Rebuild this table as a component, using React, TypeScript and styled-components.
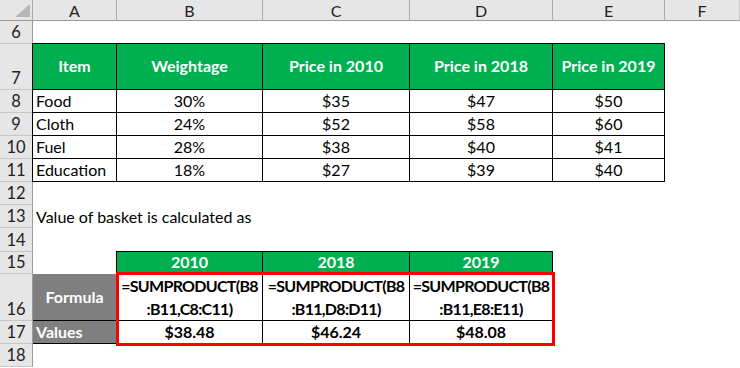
import React from 'react';
import styled, { createGlobalStyle } from 'styled-components';

const GlobalStyle = createGlobalStyle`
  html, body {
    margin: 0;
    padding: 0;
    background: #ffffff;
  }
  body {
    font-family: Lato, "Open Sans", sans-serif;
    font-size: 16px;
    color: #000;
  }
`;

const COLS = ['A', 'B', 'C', 'D', 'E', 'F'];
const ROWS = [6, 7, 8, 9, 10, 11, 12, 13, 14, 15, 16, 17, 18];

// grid row index for a sheet row (row 1 of the grid is the column header)
const gr = (row: number) => row - 4;
// grid column index for a sheet column (column 1 is the row numbers)
const gc = (col: string) => COLS.indexOf(col) + 2;

const items = [
  { name: 'Item', weight: 'Weightage', p10: 'Price in 2010', p18: 'Price in 2018', p19: 'Price in 2019' },
  { name: 'Food', weight: '30%', p10: '$35', p18: '$47', p19: '$50' },
  { name: 'Cloth', weight: '24%', p10: '$52', p18: '$58', p19: '$60' },
  { name: 'Fuel', weight: '28%', p10: '$38', p18: '$40', p19: '$41' },
  { name: 'Education', weight: '18%', p10: '$27', p18: '$39', p19: '$40' },
];

const basket = [
  { col: 'B', year: '2010', formula: ['=SUMPRODUCT(B8', ':B11,C8:C11)'], value: '$38.48' },
  { col: 'C', year: '2018', formula: ['=SUMPRODUCT(B8', ':B11,D8:D11)'], value: '$46.24' },
  { col: 'D', year: '2019', formula: ['=SUMPRODUCT(B8', ':B11,E8:E11)'], value: '$48.08' },
];

export default function App() {
  return (
    <>
      <GlobalStyle />
      <Sheet>
        <Corner>
          <svg width="33" height="21" viewBox="0 0 33 21">
            <polygon points="15,17 30,17 30,4" fill="#b7b7b7" />
          </svg>
        </Corner>
        {COLS.map((c) => (
          <ColHead key={c} $last={c === 'F'}>{c}</ColHead>
        ))}
        {ROWS.map((r) => (
          <RowNum key={r} style={{ gridRow: gr(r) }}>
            {r}
          </RowNum>
        ))}

        {items.map((it, i) => {
          const row = 7 + i;
          const head = i === 0;
          const cells = [it.name, it.weight, it.p10, it.p18, it.p19];
          return cells.map((text, j) => (
            <Cell
              key={`${row}-${j}`}
              $row={gr(row)}
              $col={gc(COLS[j])}
              $fill={head ? 'green' : undefined}
              $bold={head}
              $align={!head && j === 0 ? 'left' : 'center'}
              $valign={head ? 'center' : 'end'}
              $top={head}
              $left={j === 0}
              $border
            >
              {text}
            </Cell>
          ));
        })}

        <Note style={{ gridRow: gr(13) }}>Value of basket is calculated as</Note>

        <Cell $row={gr(16)} $col={gc('A')} $fill="gray" $bold $align="center" $valign="center" $border>
          Formula
        </Cell>
        <Cell $row={gr(17)} $col={gc('A')} $fill="gray" $bold $align="left" $valign="end" $border>
          Values
        </Cell>

        {basket.map((b) => (
          <React.Fragment key={b.col}>
            <Cell $row={gr(15)} $col={gc(b.col)} $fill="green" $bold $align="center" $valign="end" $top $left={b.col === 'B'} $border>
              {b.year}
            </Cell>
            <Cell $row={gr(16)} $col={gc(b.col)} $bold $align="center" $valign="center" $left={b.col === 'B'} $border>
              <Wrapped>
                {b.formula.map((line) => (
                  <span key={line}>{line}</span>
                ))}
              </Wrapped>
            </Cell>
            <Cell $row={gr(17)} $col={gc(b.col)} $bold $align="center" $valign="end" $left={b.col === 'B'} $border>
              {b.value}
            </Cell>
          </React.Fragment>
        ))}

        <Highlight />
      </Sheet>
    </>
  );
}

const Sheet = styled.div`
  display: grid;
  grid-template-columns: 33px 84px 146px 147px 143px 112px 1fr;
  grid-template-rows: 21px 23px 46px 23px 23px 23px 23px 23px 23px 24px 22px 47px 23px 23px 1fr;
  width: 740px;
  height: 368px;
  overflow: hidden;
  background: #fff;
`;

const Corner = styled.div`
  grid-row: 1;
  grid-column: 1;
  background: #e6e6e6;
  border-right: 1px solid #ababab;
  border-bottom: 1px solid #9b9b9b;
  box-sizing: border-box;
  line-height: 0;
`;

const ColHead = styled.div<{ $last?: boolean }>`
  grid-row: 1;
  display: flex;
  align-items: center;
  justify-content: center;
  background: #e6e6e6;
  border-right: 1px solid ${({ $last }) => ($last ? '#c8c8c8' : '#ababab')};
  border-bottom: 1px solid #9b9b9b;
  box-sizing: border-box;
  color: #222;
  font-size: 16px;
  ${({ $last }) => $last && 'grid-column: 7 / 8; max-width: 100px;'}
`;

const RowNum = styled.div`
  grid-column: 1;
  display: flex;
  align-items: flex-end;
  justify-content: center;
  padding-bottom: 1px;
  background: #e6e6e6;
  border-right: 1px solid #9b9b9b;
  border-bottom: 1px solid #c6c6c6;
  box-sizing: border-box;
  color: #222;
  font-size: 16.5px;
  line-height: 20px;
`;

const Cell = styled.div<{
  $row: number;
  $col: number;
  $fill?: 'green' | 'gray';
  $bold?: boolean;
  $align: 'left' | 'center';
  $valign: 'center' | 'end';
  $top?: boolean;
  $left?: boolean;
  $border?: boolean;
}>`
  grid-row: ${({ $row }) => $row};
  grid-column: ${({ $col }) => $col};
  display: flex;
  align-items: ${({ $valign }) => ($valign === 'end' ? 'flex-end' : 'center')};
  justify-content: ${({ $align }) => ($align === 'left' ? 'flex-start' : 'center')};
  padding: 0 3px 1px;
  box-sizing: border-box;
  background: ${({ $fill }) => ($fill === 'green' ? '#00b050' : $fill === 'gray' ? '#7f7f7f' : '#fff')};
  color: ${({ $fill }) => ($fill ? '#fff' : '#000')};
  font-weight: ${({ $bold }) => ($bold ? 700 : 400)};
  font-size: 16px;
  line-height: 20px;
  white-space: nowrap;
  border-right: ${({ $border }) => ($border ? '1px solid #000' : 'none')};
  border-bottom: ${({ $border }) => ($border ? '1px solid #000' : 'none')};
  border-top: ${({ $top }) => ($top ? '1px solid #000' : 'none')};
  margin-top: ${({ $top }) => ($top ? '-1px' : '0')};
  border-left: ${({ $left }) => ($left ? '1px solid #000' : 'none')};
  margin-left: ${({ $left }) => ($left ? '-1px' : '0')};
`;

const Wrapped = styled.div`
  display: flex;
  flex-direction: column;
  align-items: center;
  line-height: 23px;
  letter-spacing: -0.7px;
`;

const Note = styled.div`
  grid-column: 2 / 5;
  display: flex;
  align-items: flex-end;
  padding: 0 3px 1px;
  font-size: 16px;
  line-height: 20px;
`;

const Highlight = styled.div`
  grid-row: 12 / 14;
  grid-column: 3 / 6;
  margin: -2px -2px -2px -1px;
  border: 3px solid #ff0000;
  pointer-events: none;
  z-index: 1;
`;
